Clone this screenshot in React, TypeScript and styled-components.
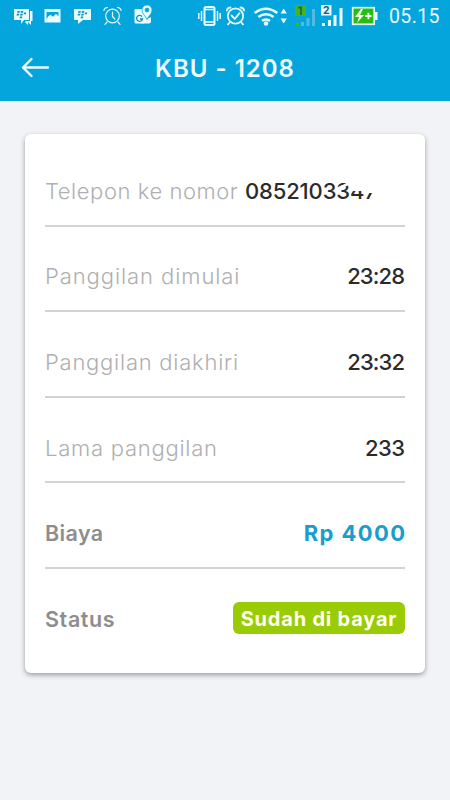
import React from "react";
import styled, { createGlobalStyle } from "styled-components";

const GlobalStyle = createGlobalStyle`
  * { box-sizing: border-box; }
  body { margin: 0; background: #f2f3f6; }
`;

const Screen = styled.main`
  width: 450px;
  height: 800px;
  overflow: hidden;
  background: #f2f3f6;
  font-family: Inter, sans-serif;
`;

const StatusBar = styled.div`
  display: flex;
  align-items: center;
  height: 34px;
  background: #04a4dd;
`;

const StatusIcons = styled.svg`
  display: block;
  flex: none;
  width: 386px;
  height: 34px;
`;

const Clock = styled.span`
  color: #e9fbff;
  font-family: Roboto, sans-serif;
  font-size: 19.5px;
  line-height: 34px;
  letter-spacing: 0.4px;
  margin-left: 3px;
`;

const Header = styled.header`
  display: grid;
  grid-template-columns: 60px 1fr 60px;
  align-items: center;
  height: 67px;
  background: #04a4dd;
`;

const BackButton = styled.button`
  display: flex;
  padding: 0 0 0 21px;
  border: 0;
  background: none;
`;

const Title = styled.h1`
  margin: 2px 0 0;
  text-align: center;
  color: #effcff;
  font-size: 24px;
  font-weight: 600;
  line-height: 30px;
  letter-spacing: 1px;
`;

const Card = styled.section`
  width: 400px;
  height: 539px;
  margin: 33px 25px 0;
  padding: 7px 20px 0;
  border-radius: 6px;
  background: #fff;
  box-shadow: 0 2px 5px rgba(0, 0, 0, 0.36);
`;

const Row = styled.div`
  display: flex;
  align-items: center;
  justify-content: space-between;
  height: 85.6px;
  padding-top: 16px;
  border-bottom: 2px solid #d3d3d6;
  &:last-child {
    padding-top: 14px;
    border-bottom: 0;
  }
`;

const Label = styled.span<{ $strong?: boolean; $track: number }>`
  color: ${(p) => (p.$strong ? "#8d8d8f" : "#afafb1")};
  font-size: ${(p) => (p.$strong ? 21.5 : 22)}px;
  font-weight: ${(p) => (p.$strong ? 600 : 300)};
  line-height: 30px;
  letter-spacing: ${(p) => p.$track}px;
  white-space: nowrap;
`;

const Value = styled.span<{ $tone?: "blue"; $track: number }>`
  color: ${(p) => (p.$tone === "blue" ? "#1a9dcc" : "#2b2b2d")};
  font-size: 22px;
  font-weight: ${(p) => (p.$tone === "blue" ? 700 : 500)};
  line-height: 30px;
  letter-spacing: ${(p) => p.$track}px;
  margin-right: ${(p) => -p.$track}px;
  white-space: nowrap;
`;

const PhoneNumber = styled.span`
  position: relative;
  width: 160px;
  height: 30px;
`;

const Redaction = styled.svg`
  position: absolute;
  left: 0;
  top: 0;
`;

const Badge = styled.span`
  display: flex;
  align-items: center;
  justify-content: center;
  width: 172px;
  height: 32px;
  margin-top: -2px;
  padding-top: 2px;
  border-radius: 6px;
  background: #99cb07;
  color: #fffff0;
  font-size: 20px;
  font-weight: 700;
  letter-spacing: 0.8px;
  white-space: nowrap;
`;

function BbmDots({ x }: { x: number }) {
  return (
    <g fill="#168fbb" transform={`translate(${x} 0)`}>
      <path d="M5.5 11h2.4l-.4 1.8H5zM9 11h2.4l-.4 1.8H8.500zM5 13.800h2.400l-.4 1.800H4.500zM8.500 13.800h2.400l-.4 1.800H8zM12 12.500h2.300l-.4 1.800h-2.300zM8 16.500h2.400l-.4 1.700H7.500z" />
    </g>
  );
}

function AlarmClock({ cx, check }: { cx: number; check?: boolean }) {
  return (
    <g
      transform={`translate(${cx} 16)`}
      fill="none"
      stroke="#e8fbff"
      strokeWidth={check ? 1.8 : 1.2}
      strokeLinecap="round"
    >
      <circle r={check ? 7.7 : 6.8} />
      <path d="M-8.6-5.5Q-8-8.5-5-8.5M8.6-5.5Q8-8.5 5-8.5M-5.5 6l-2 2.3M5.5 6l2 2.3" />
      <path d={check ? "M-4-.5l3.3 3.3L4-2.8" : "M0-4V.5l2.3 2.5"} />
    </g>
  );
}

function SystemIcons() {
  return (
    <StatusIcons viewBox="0 0 386 34" aria-hidden="true">
      <g fill="#e8fbff">
        <path d="M14 9h15v11h-5l-3 4v-4h-7z" />
        <path d="M30 11h2.500v10H31v4l-3-3v3l-3-3 1-1h4z" />
        <path fillRule="evenodd" d="M44.5 9h16v13.500h-16zM46.500 12v7.500q1.500-4 4-4.800l2.500 2 3-3 2.500 2.500V12z" />
        <path d="M74 9h17v11h-8l-5 4v-4h-4z" />
        <path d="M135 9h10v13q0 1.500-1.500 1.500H136q-1.500 0-1.500-1.500V10z" />
        <path d="M141 23.500h8q2 0 2-2V17l-4 2-4-5z" />
        <path
          fillRule="evenodd"
          stroke="#04a4dd"
          strokeWidth=".7"
          d="M147 19.500c-1-3-5-5.500-5-9.500a5 5 0 0 1 10 0c0 4-4 6.500-5 9.500zM147 8a2 2 0 1 0 0 4 2 2 0 0 0 0-4z"
        />
      </g>
      <BbmDots x={12} />
      <BbmDots x={73} />
      <AlarmClock cx={112.5} />
      <path d="M142 16.5a3 3 0 1 0 .5 2.500H140" fill="none" stroke="#168fbb" strokeWidth="1.3" />

      <g fill="none" stroke="#e8fbff" strokeWidth="1.5">
        <rect x="204.500" y="7" width="10" height="18" rx="1.5" strokeWidth="2" />
        <path d="M204.500 9.500h10M204.500 22h10M201.500 11v10M198.800 13v6M217.500 11v10M220.200 13v6" />
      </g>
      <path d="M208.500 23.500h2" stroke="#04a4dd" />
      <AlarmClock cx={235.5} check />
      <g fill="none" stroke="#e8fbff" strokeWidth="2.600">
        <path d="M254.700 13q11.300-8.500 22.600 0M258.400 17q7.600-5.500 15.200 0M262 20.800q4-2.700 8 0" />
      </g>
      <circle cx="266" cy="23.500" r="2.300" fill="#e8fbff" />
      <path d="M280.500 13.500l3.200-5 3.200 5zM280.500 18.500h6.400l-3.200 5z" fill="#e8fbff" />

      <path d="M295 5h11v11h-11z" fill="#45b51c" />
      <text x="300.500" y="14.500" textAnchor="middle" fill="#176e50" fontFamily="Roboto, sans-serif" fontSize="12" fontWeight="700">1</text>
      <circle cx="297.500" cy="24.500" r="2" fill="#45b51c" />
      <path d="M301 22h3v4h-3zM306.500 18h3v8h-3zM312 9h3v17h-3z" fill="#52b9df" />

      <path d="M321 5h10.500v10.500H321z" fill="#e8fbff" />
      <text x="326.200" y="14.300" textAnchor="middle" fill="#17627b" fontFamily="Roboto, sans-serif" fontSize="11.5" fontWeight="700">2</text>
      <path d="M322 23h3v3h-3zM328 20h3v6h-3zM333.500 15h3v11h-3zM339.500 8h3v18h-3z" fill="#e8fbff" />

      <path d="M374 12h3.500v8H374z" fill="#e8fbff" />
      <rect x="352.700" y="7.700" width="21.500" height="16.600" fill="#29bd13" stroke="#e8fbff" strokeWidth="1.7" />
      <path d="M361 9l-6 8h4l-2 6 7-8h-4l3-6zM367.500 12.800h1.800v2.300h2.300v1.800h-2.300v2.300h-1.800v-2.300h-2.300v-1.800h2.300z" fill="#efffef" />
    </StatusIcons>
  );
}

export default function App() {
  return (
    <>
      <GlobalStyle />
      <Screen>
        <StatusBar>
          <SystemIcons />
          <Clock>05.15</Clock>
        </StatusBar>
        <Header>
          <BackButton aria-label="Kembali">
            <svg width="30" height="24" viewBox="0 0 30 24" fill="none" stroke="#effcff" strokeWidth="2.4" strokeLinecap="round" strokeLinejoin="round">
              <path d="M27 11.5H2M10.500 3L2 11.500l8.500 8.500" />
            </svg>
          </BackButton>
          <Title>KBU - 1208</Title>
        </Header>
        <Card>
          <Row>
            <Label $track={0.55}>Telepon ke nomor</Label>
            <PhoneNumber>
              <Value $track={-0.15}>0852103347</Value>
              <Redaction width="160" height="30" viewBox="0 0 160 30">
                <path d="M105 3H136V17H119L117 15H105z" fill="#fff" />
                <path d="M92 13l13-6" stroke="#fff" strokeWidth="2.5" />
              </Redaction>
            </PhoneNumber>
          </Row>
          <Row>
            <Label $track={0.92}>Panggilan dimulai</Label>
            <Value $track={-0.9}>23:28</Value>
          </Row>
          <Row>
            <Label $track={0.75}>Panggilan diakhiri</Label>
            <Value $track={-0.9}>23:32</Value>
          </Row>
          <Row>
            <Label $track={0.75}>Lama panggilan</Label>
            <Value $track={-0.6}>233</Value>
          </Row>
          <Row>
            <Label $strong $track={0.4}>Biaya</Label>
            <Value $tone="blue" $track={1.4}>Rp 4000</Value>
          </Row>
          <Row>
            <Label $strong $track={0.6}>Status</Label>
            <Badge>Sudah di bayar</Badge>
          </Row>
        </Card>
      </Screen>
    </>
  );
}
